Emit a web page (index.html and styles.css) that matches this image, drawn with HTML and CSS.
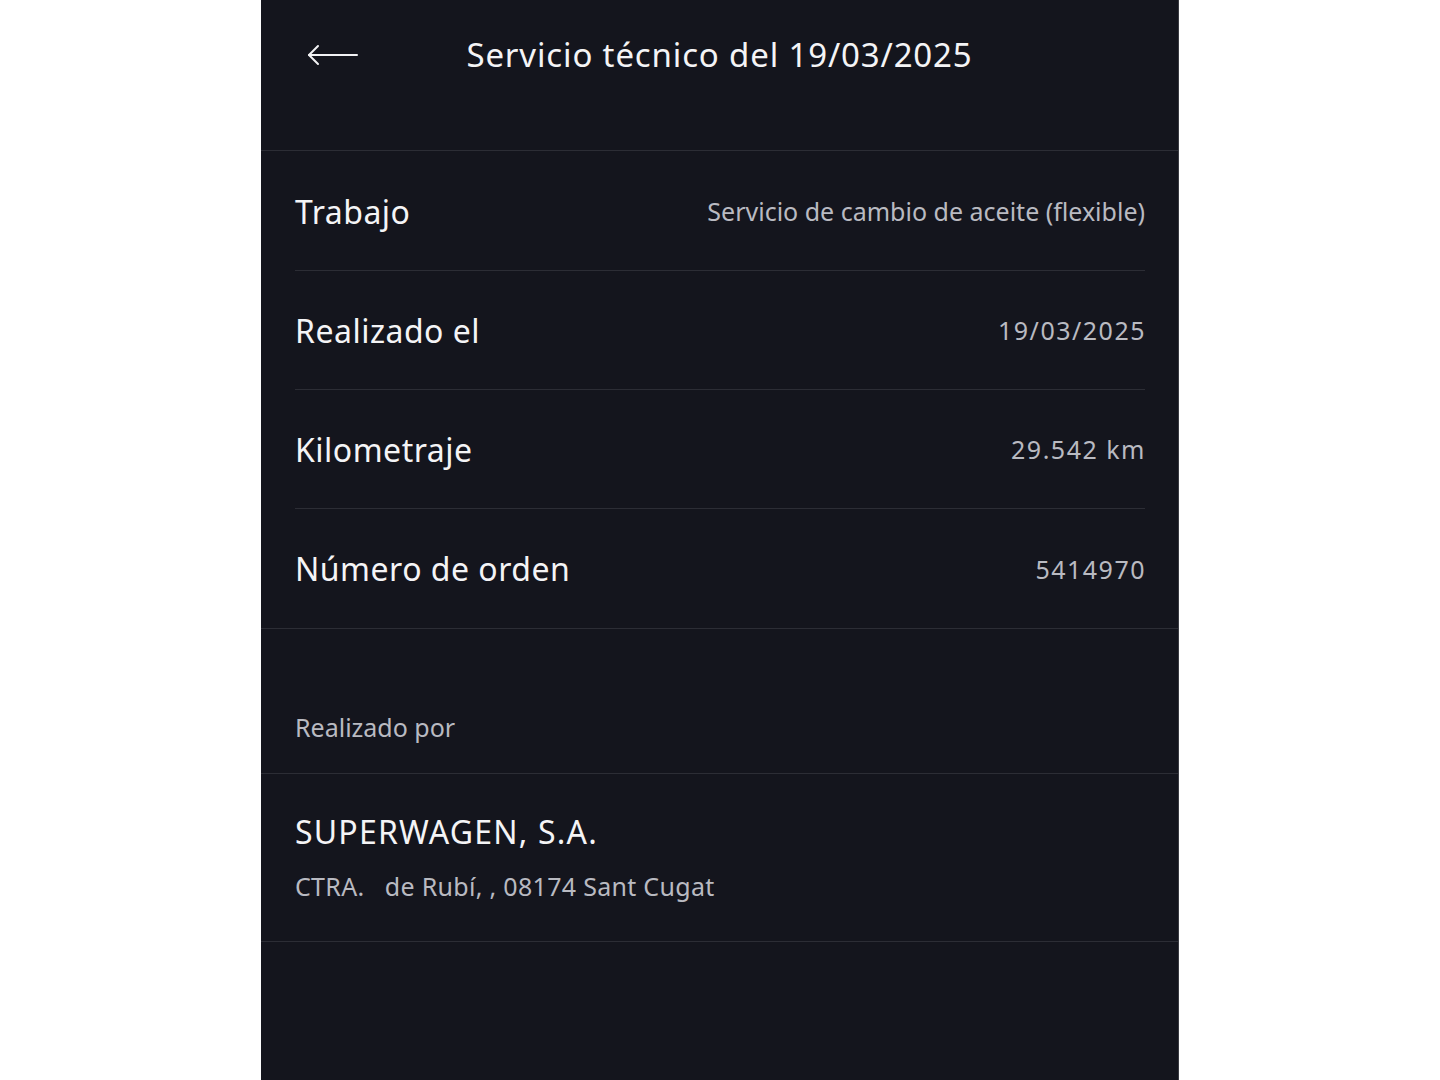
FILE: index.html
```html
<!DOCTYPE html>
<html lang="es">
<head>
    <meta charset="UTF-8">
    <meta name="viewport" content="width=device-width, initial-scale=1.0">
    <title>Servicio técnico</title>
    <link rel="stylesheet" href="styles.css">
</head>
<body>
    <div class="screen">
        <header class="topbar">
            <button class="back" aria-label="Volver">
                <svg width="52" height="24" viewBox="0 0 52 24" fill="none" stroke="#f2f2f4" stroke-width="2" stroke-linecap="round" stroke-linejoin="round">
                    <path d="M2 12 H50"/>
                    <path d="M11 3 L2 12 L11 21"/>
                </svg>
            </button>
            <h1 class="title">Servicio técnico del 19/03/2025</h1>
            <span></span>
        </header>

        <div class="details">
            <div class="row">
                <span class="label">Trabajo</span>
                <span class="value">Servicio de cambio de aceite (flexible)</span>
            </div>
            <div class="row">
                <span class="label">Realizado el</span>
                <span class="value num">19/03/2025</span>
            </div>
            <div class="row">
                <span class="label">Kilometraje</span>
                <span class="value num">29.542 km</span>
            </div>
            <div class="row">
                <span class="label">Número de orden</span>
                <span class="value num">5414970</span>
            </div>
        </div>

        <div class="section-head">Realizado por</div>

        <div class="dealer">
            <div class="dealer-name">SUPERWAGEN, S.A.</div>
            <div class="dealer-address">CTRA.&nbsp;&nbsp; de Rubí, , 08174 Sant Cugat</div>
        </div>
    </div>
</body>
</html>
```

FILE: styles.css
```css
body {
    margin: 0;
    padding: 0;
    background-color: #ffffff;
    font-family: "Noto Sans", "Open Sans", sans-serif;
}

.screen {
    width: 918px;
    min-height: 1080px;
    margin: 0 auto;
    background-color: #14151d;
    color: #f4f4f6;
    border-right: 1px solid #3a3b42;
    box-sizing: border-box;
}

.topbar {
    height: 151px;
    display: grid;
    grid-template-columns: 1fr auto 1fr;
    align-items: start;
    border-bottom: 1px solid #2c2d35;
    box-sizing: border-box;
}

.back {
    justify-self: start;
    margin: 43px 0 0 46px;
    padding: 0;
    background: none;
    border: none;
    cursor: pointer;
    line-height: 0;
}

.title {
    margin: 32px 0 0;
    font-size: 33px;
    font-weight: 400;
    letter-spacing: 0.85px;
}

.details {
    padding: 1px 33px 0 34px;
    border-bottom: 1px solid #2c2d35;
}

.row {
    height: 119px;
    display: flex;
    align-items: center;
    justify-content: space-between;
    border-bottom: 1px solid #2c2d35;
    box-sizing: border-box;
}

.row:last-child {
    border-bottom: none;
}

.label {
    font-size: 32px;
    letter-spacing: 0.5px;
}

.value {
    font-size: 25px;
    color: #b9bac1;
}

.value.num {
    letter-spacing: 1.5px;
    margin-right: -1px;
}

.section-head {
    height: 145px;
    box-sizing: border-box;
    display: flex;
    align-items: flex-end;
    padding: 0 34px 29px;
    font-size: 25px;
    color: #b9bac1;
    border-bottom: 1px solid #2c2d35;
}

.dealer {
    height: 168px;
    box-sizing: border-box;
    padding: 36px 34px 0;
    border-bottom: 1px solid #2c2d35;
}

.dealer-name {
    font-size: 32px;
    line-height: 44px;
    letter-spacing: 1.2px;
}

.dealer-address {
    margin-top: 15px;
    font-size: 25px;
    letter-spacing: 0.3px;
    color: #b9bac1;
}
```
